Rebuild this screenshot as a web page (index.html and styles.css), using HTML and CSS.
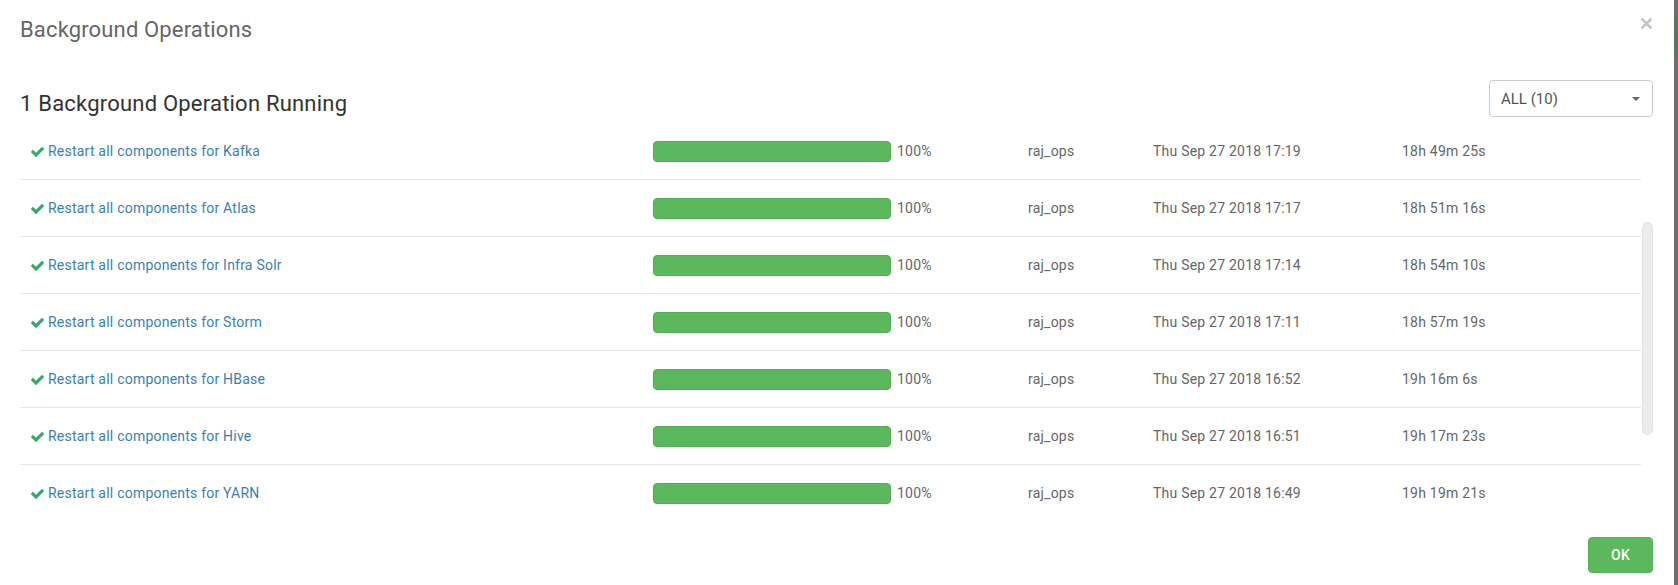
FILE: index.html
```html
<!DOCTYPE html>
<html lang="en">
<head>
<meta charset="utf-8">
<title>Background Operations</title>
<link rel="stylesheet" href="styles.css">
</head>
<body>
<div class="modal">
  <div class="modal-header">
    <h3 class="modal-title">Background Operations</h3>
    <button class="close" aria-label="Close">
      <svg viewBox="0 0 11 11" width="11" height="11"><path d="M1.5 1.5 L9.5 9.5 M9.5 1.5 L1.5 9.5" stroke="#c4c4c4" stroke-width="2.6" stroke-linecap="square"/></svg>
    </button>
  </div>
  <div class="modal-body">
    <div class="toolbar">
      <h4 class="running">1 Background Operation Running</h4>
      <div class="select">
        <span>ALL (10)</span>
        <svg class="caret" viewBox="0 0 8 4" width="8" height="4"><path d="M0 0 L8 0 L4 4 Z" fill="#666"/></svg>
      </div>
    </div>
    <div class="list-wrap">
      <div class="list">
        <div class="row">
          <div class="name"><svg class="check" viewBox="121 334 1550 1188" width="13" height="10"><path d="M1671 566q0 40-28 68l-724 724-136 136q-28 28-68 28t-68-28l-136-136-362-362q-28-28-28-68t28-68l136-136q28-28 68-28t68 28l294 295 656-657q28-28 68-28t68 28l136 136q28 28 28 68z"/></svg><a href="#">Restart all components for Kafka</a></div>
          <div class="progress-cell"><div class="bar"></div><span>100%</span></div>
          <div class="user">raj_ops</div>
          <div class="date">Thu Sep 27 2018 17:19</div>
          <div class="dur">18h 49m 25s</div>
        </div>
        <div class="row">
          <div class="name"><svg class="check" viewBox="121 334 1550 1188" width="13" height="10"><path d="M1671 566q0 40-28 68l-724 724-136 136q-28 28-68 28t-68-28l-136-136-362-362q-28-28-28-68t28-68l136-136q28-28 68-28t68 28l294 295 656-657q28-28 68-28t68 28l136 136q28 28 28 68z"/></svg><a href="#">Restart all components for Atlas</a></div>
          <div class="progress-cell"><div class="bar"></div><span>100%</span></div>
          <div class="user">raj_ops</div>
          <div class="date">Thu Sep 27 2018 17:17</div>
          <div class="dur">18h 51m 16s</div>
        </div>
        <div class="row">
          <div class="name"><svg class="check" viewBox="121 334 1550 1188" width="13" height="10"><path d="M1671 566q0 40-28 68l-724 724-136 136q-28 28-68 28t-68-28l-136-136-362-362q-28-28-28-68t28-68l136-136q28-28 68-28t68 28l294 295 656-657q28-28 68-28t68 28l136 136q28 28 28 68z"/></svg><a href="#">Restart all components for Infra Solr</a></div>
          <div class="progress-cell"><div class="bar"></div><span>100%</span></div>
          <div class="user">raj_ops</div>
          <div class="date">Thu Sep 27 2018 17:14</div>
          <div class="dur">18h 54m 10s</div>
        </div>
        <div class="row">
          <div class="name"><svg class="check" viewBox="121 334 1550 1188" width="13" height="10"><path d="M1671 566q0 40-28 68l-724 724-136 136q-28 28-68 28t-68-28l-136-136-362-362q-28-28-28-68t28-68l136-136q28-28 68-28t68 28l294 295 656-657q28-28 68-28t68 28l136 136q28 28 28 68z"/></svg><a href="#">Restart all components for Storm</a></div>
          <div class="progress-cell"><div class="bar"></div><span>100%</span></div>
          <div class="user">raj_ops</div>
          <div class="date">Thu Sep 27 2018 17:11</div>
          <div class="dur">18h 57m 19s</div>
        </div>
        <div class="row">
          <div class="name"><svg class="check" viewBox="121 334 1550 1188" width="13" height="10"><path d="M1671 566q0 40-28 68l-724 724-136 136q-28 28-68 28t-68-28l-136-136-362-362q-28-28-28-68t28-68l136-136q28-28 68-28t68 28l294 295 656-657q28-28 68-28t68 28l136 136q28 28 28 68z"/></svg><a href="#">Restart all components for HBase</a></div>
          <div class="progress-cell"><div class="bar"></div><span>100%</span></div>
          <div class="user">raj_ops</div>
          <div class="date">Thu Sep 27 2018 16:52</div>
          <div class="dur">19h 16m 6s</div>
        </div>
        <div class="row">
          <div class="name"><svg class="check" viewBox="121 334 1550 1188" width="13" height="10"><path d="M1671 566q0 40-28 68l-724 724-136 136q-28 28-68 28t-68-28l-136-136-362-362q-28-28-28-68t28-68l136-136q28-28 68-28t68 28l294 295 656-657q28-28 68-28t68 28l136 136q28 28 28 68z"/></svg><a href="#">Restart all components for Hive</a></div>
          <div class="progress-cell"><div class="bar"></div><span>100%</span></div>
          <div class="user">raj_ops</div>
          <div class="date">Thu Sep 27 2018 16:51</div>
          <div class="dur">19h 17m 23s</div>
        </div>
        <div class="row">
          <div class="name"><svg class="check" viewBox="121 334 1550 1188" width="13" height="10"><path d="M1671 566q0 40-28 68l-724 724-136 136q-28 28-68 28t-68-28l-136-136-362-362q-28-28-28-68t28-68l136-136q28-28 68-28t68 28l294 295 656-657q28-28 68-28t68 28l136 136q28 28 28 68z"/></svg><a href="#">Restart all components for YARN</a></div>
          <div class="progress-cell"><div class="bar"></div><span>100%</span></div>
          <div class="user">raj_ops</div>
          <div class="date">Thu Sep 27 2018 16:49</div>
          <div class="dur">19h 19m 21s</div>
        </div>
      </div>
      <div class="scroll-track"><div class="thumb"></div></div>
    </div>
  </div>
  <div class="modal-footer">
    <button class="ok">OK</button>
  </div>
</div>
<div class="edge"><div class="edge-green"></div></div>
</body>
</html>
```

FILE: styles.css
```css
* { box-sizing: border-box; }
html, body { margin: 0; padding: 0; }
body {
  display: flex;
  width: 1678px;
  height: 585px;
  overflow: hidden;
  background: #fff;
  font-family: Roboto, "Liberation Sans", Arial, sans-serif;
  color: #666;
}
.modal {
  width: 1674px;
  height: 585px;
  background: #fff;
  display: flex;
  flex-direction: column;
}
.edge {
  width: 4px;
  height: 585px;
  background: #6e6e6e;
  padding-top: 16px;
}
.edge-green {
  height: 44px;
  background: #5d765f;
}
.modal-header {
  display: flex;
  justify-content: space-between;
  align-items: flex-start;
  padding: 17px 22px 0 20px;
}
.modal-title {
  margin: 0;
  font-size: 22px;
  line-height: 26px;
  font-weight: 400;
  letter-spacing: 0.15px;
  color: #666;
}
.close {
  margin-top: 1px;
  padding: 0;
  border: 0;
  background: none;
  width: 11px;
  height: 11px;
  display: block;
}
.close svg { display: block; }
.modal-body {
  padding: 37px 21px 0 20px;
}
.toolbar {
  display: flex;
  justify-content: space-between;
  align-items: flex-start;
  height: 37px;
}
.running {
  margin: 11px 0 0 0;
  font-size: 22px;
  line-height: 26px;
  font-weight: 400;
  letter-spacing: 0.21px;
  color: #333;
}
.select {
  width: 164px;
  height: 37px;
  border: 1px solid #ccc;
  border-radius: 4px;
  display: flex;
  align-items: center;
  justify-content: space-between;
  padding: 1px 12px 0 11px;
  font-size: 15px;
  color: #555;
}
.caret { display: block; }
.list-wrap {
  display: flex;
  margin-top: 6px;
  gap: 1px;
}
.list {
  width: 1622px;
}
.row {
  display: grid;
  grid-template-columns: 622px 375px 125px 249px 1fr;
  align-items: center;
  height: 57px;
  padding-left: 11px;
  border-bottom: 1px solid #e8e8e8;
  font-size: 14px;
  line-height: 20px;
  letter-spacing: 0.22px;
  color: #666;
}
.row:last-child { border-bottom: 0; height: 56px; }
.name {
  display: flex;
  align-items: center;
  gap: 4px;
}
.check {
  display: block;
  fill: #35aa68;
  margin-top: 1px;
}
.name a {
  color: #3a7fb4;
  text-decoration: none;
}
.progress-cell {
  display: flex;
  align-items: center;
  gap: 6px;
}
.bar {
  width: 238px;
  height: 21px;
  background: #5cb85c;
  border: 1px solid #55ad55;
  border-radius: 4px;
}
.scroll-track {
  width: 11px;
  padding-top: 99px;
}
.thumb {
  width: 11px;
  height: 213px;
  background: #ececec;
  border: 1px solid #e2e2e2;
  border-radius: 6px;
}
.modal-footer {
  display: flex;
  justify-content: flex-end;
  padding: 16px 21px 0 20px;
}
.ok {
  width: 65px;
  height: 36px;
  border: 1px solid #57b457;
  border-radius: 4px;
  background: #5cb85c;
  color: #fff;
  font-family: Roboto, "Liberation Sans", Arial, sans-serif;
  font-size: 14px;
  font-weight: 500;
  letter-spacing: 0.2px;
  padding: 0;
}
```
